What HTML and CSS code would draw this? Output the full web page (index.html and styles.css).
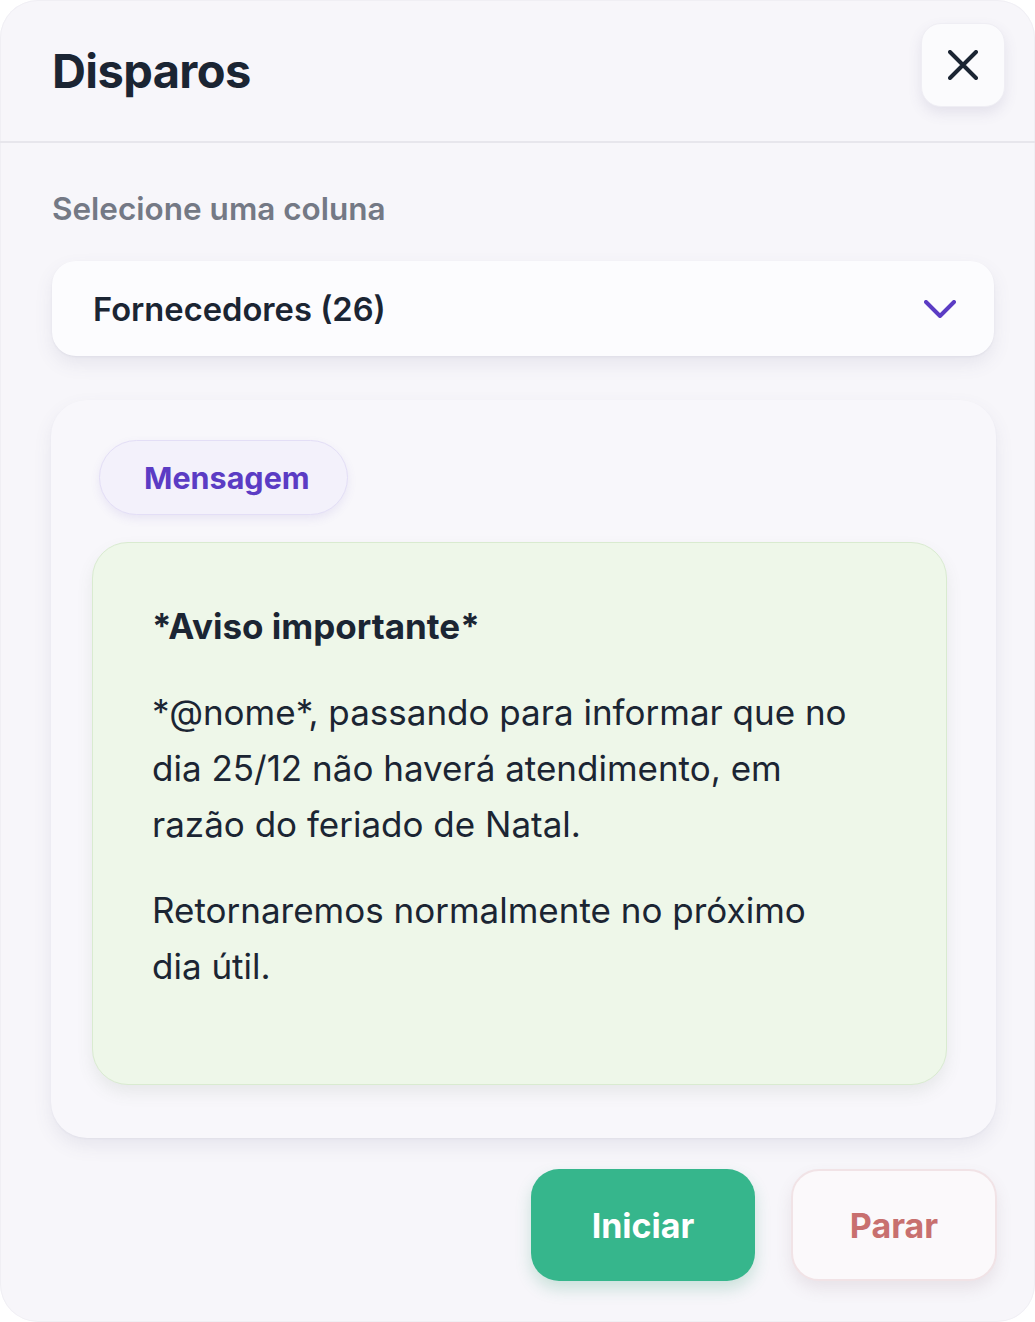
FILE: index.html
```html
<!DOCTYPE html>
<html lang="pt-BR">
<head>
    <meta charset="utf-8">
    <title>Disparos</title>
    <link rel="stylesheet" href="styles.css">
</head>
<body>
    <div class="panel">
        <div class="panel-header">
            <h1>Disparos</h1>
            <button class="close-btn" aria-label="Fechar">
                <svg width="30" height="30" viewBox="0 0 30 30"><path d="M2 2 L28 28 M28 2 L2 28" stroke="#1b2533" stroke-width="4" stroke-linecap="round" fill="none"/></svg>
            </button>
        </div>

        <div class="panel-body">
            <div class="field-label">Selecione uma coluna</div>

            <div class="select-box">
                <span>Fornecedores (26)</span>
                <svg width="32" height="18" viewBox="0 0 32 18"><path d="M2 2 L16 16 L30 2" stroke="#5b3cc4" stroke-width="4" stroke-linecap="round" stroke-linejoin="round" fill="none"/></svg>
            </div>

            <div class="card">
                <div class="pill">Mensagem</div>
                <div class="message">
                    <p class="msg-title">*Aviso importante*</p>
                    <p>*@nome*, passando para informar que no dia 25/12 não haverá atendimento, em razão do feriado de Natal.</p>
                    <p>Retornaremos normalmente no próximo dia útil.</p>
                </div>
            </div>

            <div class="actions">
                <button class="btn btn-start">Iniciar</button>
                <button class="btn btn-stop">Parar</button>
            </div>
        </div>
    </div>
</body>
</html>
```

FILE: styles.css
```css
html, body { margin: 0; padding: 0; background: #ffffff; }
body { font-family: Inter, "Noto Sans", sans-serif; color: #1b2533; }

.panel { width: 1035px; height: 1322px; box-sizing: border-box; background: #f7f6fa; border-radius: 38px; box-shadow: inset 0 0 0 1px #f0eff4; overflow: hidden; }

.panel-header { height: 143px; box-sizing: border-box; display: flex; align-items: center; justify-content: space-between; padding: 0 30px 0 52px; border-bottom: 2px solid #e7e6ec; }
.panel-header h1 { margin: 0; font-size: 47px; font-weight: 700; letter-spacing: -0.6px; color: #1b2533; }
.close-btn { width: 84px; height: 84px; margin-top: -12px; border: 1px solid #efeef4; border-radius: 20px; background: #fbfbfd; display: flex; align-items: center; justify-content: center; box-shadow: 0 6px 14px rgba(90, 85, 130, 0.12); cursor: pointer; padding: 0; }

.panel-body { padding: 44px 39px 0 51px; }

.field-label { margin-left: 1px; font-size: 31.5px; font-weight: 600; color: #747985; line-height: 44px; }

.select-box { margin: 30px 2px 0 1px; height: 95px; box-sizing: border-box; display: flex; align-items: center; justify-content: space-between; padding: 0 38px 0 41px; background: #fcfcfe; border-radius: 24px; box-shadow: 0 8px 18px rgba(90, 85, 130, 0.10), 0 1px 2px rgba(90, 85, 130, 0.08); font-size: 32.7px; font-weight: 600; color: #1b2533; }

.card { margin-top: 44px; height: 738px; box-sizing: border-box; padding: 40px 49px 0 41px; background: #f8f7fb; border-radius: 36px; box-shadow: 0 8px 18px rgba(90, 85, 130, 0.10), 0 1px 2px rgba(90, 85, 130, 0.06); }

.pill { display: inline-block; margin-left: 7px; height: 75px; box-sizing: border-box; padding: 0 37px 0 44px; line-height: 73px; border-radius: 38px; background: #f3f1fb; border: 1px solid #e3def6; box-shadow: 0 4px 10px rgba(100, 80, 190, 0.10); font-size: 30.5px; font-weight: 700; color: #5b3cc4; }

.message { margin-top: 27px; height: 543px; box-sizing: border-box; padding: 55px 88px 0 59px; background: #eef7e9; border: 1px solid #d9ebd0; border-radius: 36px; box-shadow: 0 8px 16px rgba(90, 110, 90, 0.10); font-size: 35px; line-height: 56px; color: #1b2533; }
.message p { margin: 0 0 30px; }
.message .msg-title { font-weight: 700; font-size: 35px; margin-bottom: 30px; }

.actions { display: flex; justify-content: flex-end; gap: 36px; margin-top: 31px; margin-right: -1px; }
.btn { height: 112px; border-radius: 28px; font-family: Inter, "Noto Sans", sans-serif; font-size: 34px; font-weight: 700; cursor: pointer; }
.btn-start { width: 224px; background: #36b68c; border: none; color: #ffffff; box-shadow: 0 8px 16px rgba(40, 150, 110, 0.22); }
.btn-stop { width: 206px; background: #fbf9fb; border: 2px solid #f1e3e6; color: #c8706f; box-shadow: 0 8px 16px rgba(120, 90, 110, 0.12); }
```
